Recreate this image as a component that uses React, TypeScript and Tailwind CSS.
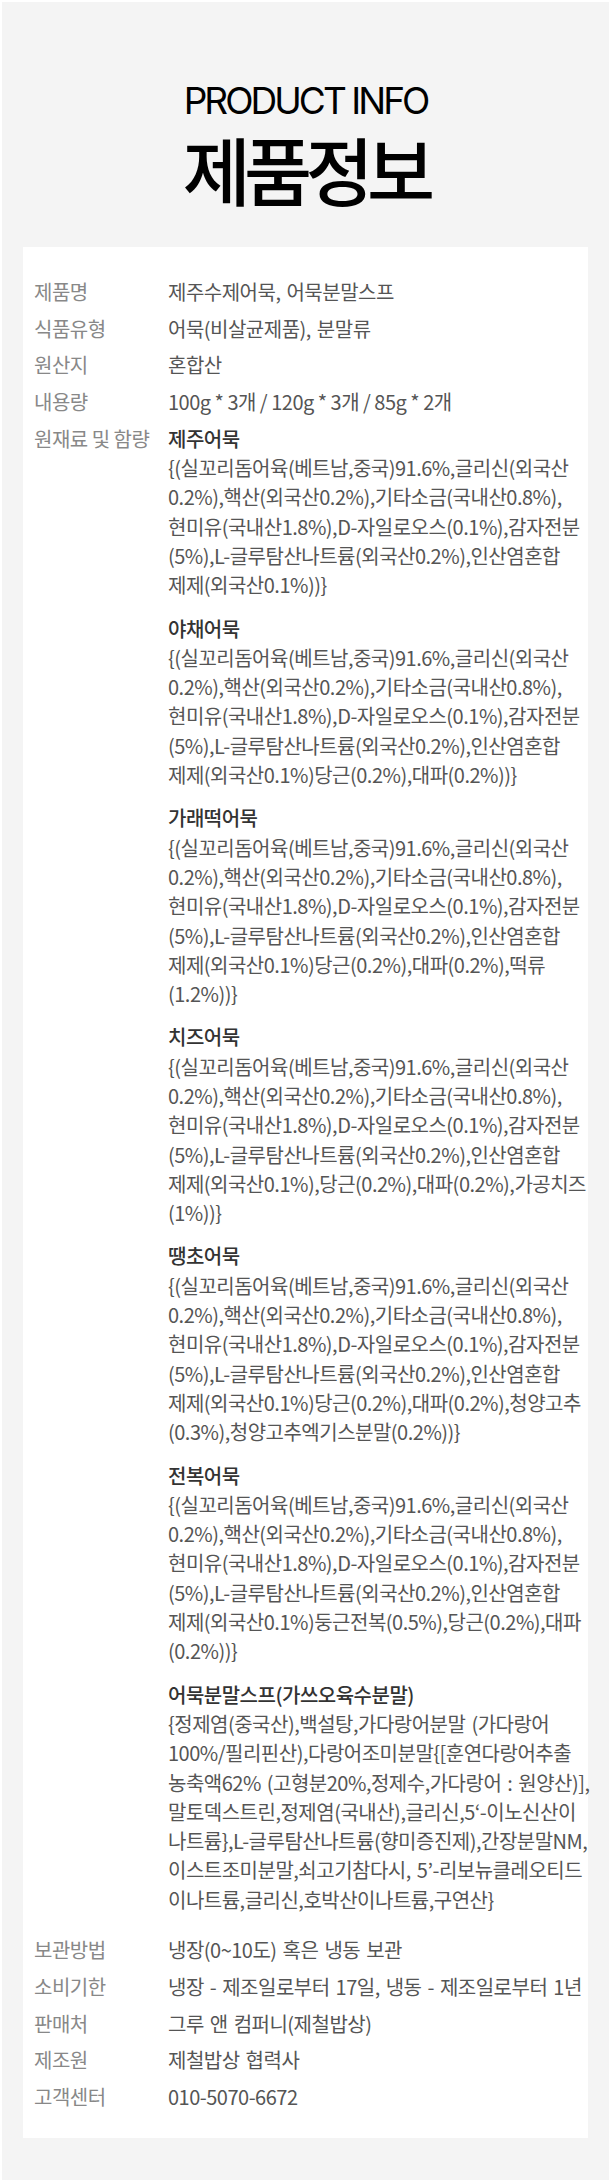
import React from "react";

type Row = { label: string; value: React.ReactNode };

const base = [
  "{(실꼬리돔어육(베트남,중국)91.6%,글리신(외국산",
  "0.2%),핵산(외국산0.2%),기타소금(국내산0.8%),",
  "현미유(국내산1.8%),D-자일로오스(0.1%),감자전분",
  "(5%),L-글루탐산나트륨(외국산0.2%),인산염혼합",
];

const groups: { title: string; lines: string[] }[] = [
  { title: "제주어묵", lines: [...base, "제제(외국산0.1%))}"] },
  { title: "야채어묵", lines: [...base, "제제(외국산0.1%)당근(0.2%),대파(0.2%))}"] },
  {
    title: "가래떡어묵",
    lines: [...base, "제제(외국산0.1%)당근(0.2%),대파(0.2%),떡류", "(1.2%))}"],
  },
  {
    title: "치즈어묵",
    lines: [...base, "제제(외국산0.1%),당근(0.2%),대파(0.2%),가공치즈", "(1%))}"],
  },
  {
    title: "땡초어묵",
    lines: [
      ...base,
      "제제(외국산0.1%)당근(0.2%),대파(0.2%),청양고추",
      "(0.3%),청양고추엑기스분말(0.2%))}",
    ],
  },
  {
    title: "전복어묵",
    lines: [...base, "제제(외국산0.1%)둥근전복(0.5%),당근(0.2%),대파", "(0.2%))}"],
  },
  {
    title: "어묵분말스프(가쓰오육수분말)",
    lines: [
      "{정제염(중국산),백설탕,가다랑어분말 (가다랑어",
      "100%/필리핀산),다랑어조미분말{[훈연다랑어추출",
      "농축액62% (고형분20%,정제수,가다랑어 : 원양산)],",
      "말토덱스트린,정제염(국내산),글리신,5‘-이노신산이",
      "나트륨},L-글루탐산나트륨(향미증진제),간장분말NM,",
      "이스트조미분말,쇠고기참다시, 5’-리보뉴클레오티드",
      "이나트륨,글리신,호박산이나트륨,구연산}",
    ],
  },
];

const Ingredients = () => (
  <div className="flex flex-col">
    {groups.map((g) => (
      <div key={g.title} className="mb-[14px]">
        <p className="font-medium text-[#333]">{g.title}</p>
        {g.lines.map((line, i) => (
          <p key={i} className="whitespace-nowrap">
            {line}
          </p>
        ))}
      </div>
    ))}
  </div>
);

const rows: Row[] = [
  { label: "제품명", value: "제주수제어묵, 어묵분말스프" },
  { label: "식품유형", value: "어묵(비살균제품), 분말류" },
  { label: "원산지", value: "혼합산" },
  {
    label: "내용량",
    value: <span className="[word-spacing:0px]">100g * 3개 / 120g * 3개 / 85g * 2개</span>,
  },
  { label: "원재료 및 함량", value: <Ingredients /> },
  { label: "보관방법", value: "냉장(0~10도) 혹은 냉동 보관" },
  { label: "소비기한", value: "냉장 - 제조일로부터 17일, 냉동 - 제조일로부터 1년" },
  { label: "판매처", value: "그루 앤 컴퍼니(제철밥상)" },
  { label: "제조원", value: "제철밥상 협력사" },
  { label: "고객센터", value: "010-5070-6672" },
];

export default function App() {
  return (
    <div className="w-[610px] bg-white pt-[2px] pl-[2px] pr-[1px] pb-[1px]">
      <div className="flex flex-col items-center bg-[#f4f4f4] pt-[80px] pb-[42px]">
        <h2 className="text-[37px] leading-[37px] tracking-[-0.08em] text-black [font-family:Inter,'Noto_Sans',sans-serif]">
          PRODUCT INFO
        </h2>
        <h1 className="mt-[12px] text-[74px] leading-[74px] font-medium tracking-[-0.09em] text-black [font-family:'Noto_Sans_CJK_KR',sans-serif]">
          제품정보
        </h1>

        <div className="mt-[42px] w-[565px] bg-white pt-[30px] pb-[27px] pl-[11px] text-[20px] leading-[29.3px] tracking-[-0.025em] [word-spacing:2px] text-[#555] [font-family:'Noto_Sans_CJK_KR','Noto_Sans',sans-serif]">
          <div className="flex flex-col gap-[7.4px]">
            {rows.map((r) => (
              <div key={r.label} className="flex">
                <div className="w-[134px] shrink-0 whitespace-nowrap text-[#888] [word-spacing:0px]">
                  {r.label}
                </div>
                <div className="min-w-0 flex-1 whitespace-nowrap">{r.value}</div>
              </div>
            ))}
          </div>
        </div>
      </div>
    </div>
  );
}
